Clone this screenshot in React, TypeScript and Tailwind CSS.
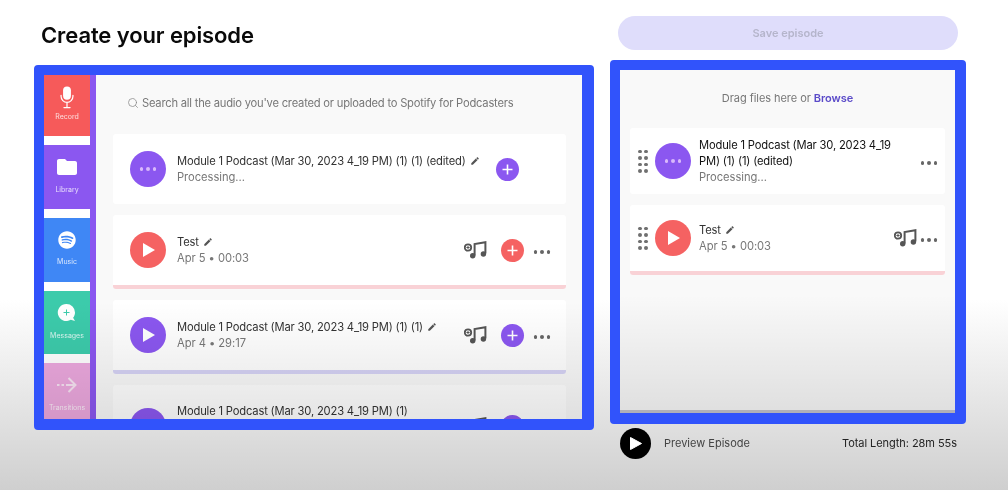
import type { ReactNode } from 'react';
import { Search } from 'lucide-react';
import { FaSpotify } from 'react-icons/fa';
import { MdEdit, MdFolder } from 'react-icons/md';

const font = { fontFamily: 'Inter, "Noto Sans", sans-serif' };

function MicIcon() {
  return (
    <svg width="14" height="23" viewBox="0 0 16 26" fill="none">
      <rect x="3.5" y="0.5" width="9" height="15" rx="4.5" fill="#fff" />
      <path d="M1.2 10.5v1.2a6.8 6.8 0 0 0 13.6 0v-1.2M8 18.5v5M4.5 24.5h7" stroke="#fff" strokeWidth="1.4" strokeLinecap="round" />
    </svg>
  );
}

function BubbleIcon() {
  return (
    <svg width="20" height="20" viewBox="0 0 20 20">
      <path d="M9.5 1a8.5 8.5 0 0 1 8.5 8.5c0 2-.7 3.9-1.9 5.3l1.9 3.2-4.2-1.3a8.5 8.5 0 1 1-4.3-15.7Z" fill="#fff" />
      <path d="M9.5 6.5v6M6.5 9.5h6" stroke="#3ccbab" strokeWidth="1" />
    </svg>
  );
}

function ArrowIcon() {
  return (
    <svg width="20" height="16" viewBox="0 0 20 16" fill="none" stroke="#f8e3f3" strokeWidth="2">
      <path d="M0 8h2.5M4.5 8h2.5M9 8h9.5" />
      <path d="M11.5 1l7 7-7 7" />
    </svg>
  );
}

function MusicAddIcon() {
  return (
    <svg width="23" height="18" viewBox="0 0 23 18" fill="none">
      <circle cx="4" cy="6.5" r="3.2" stroke="#555" strokeWidth="1.8" />
      <path d="M2.4 6.5h3.2M4 4.9v3.2" stroke="#555" strokeWidth="1" />
      <path d="M10.6 14.5V3L21.4 1.2v11.3" stroke="#555" strokeWidth="2" />
      <circle cx="8.7" cy="14.8" r="2.7" fill="#555" />
      <circle cx="19.4" cy="13" r="2.7" fill="#555" />
    </svg>
  );
}

function Dots({ className }: { className: string }) {
  return (
    <div className={`flex gap-[3px] ${className}`}>
      <span className="w-[3.5px] h-[3.5px] rounded-full bg-current" />
      <span className="w-[3.5px] h-[3.5px] rounded-full bg-current" />
      <span className="w-[3.5px] h-[3.5px] rounded-full bg-current" />
    </div>
  );
}

function PlayCircle({ color, processing }: { color: string; processing?: boolean }) {
  return (
    <div className={`w-[36px] h-[36px] shrink-0 rounded-full flex items-center justify-center ${color}`}>
      {processing ? (
        <Dots className="text-[#d9b8fb]" />
      ) : (
        <svg width="14" height="16" viewBox="0 0 14 16" className="ml-[2px]">
          <path d="M1 1l12 7-12 7Z" fill="#fff" />
        </svg>
      )}
    </div>
  );
}

function AddButton({ color }: { color: string }) {
  return (
    <div className={`w-[23px] h-[23px] shrink-0 rounded-full flex items-center justify-center ${color}`}>
      <svg width="11" height="11" viewBox="0 0 11 11">
        <path d="M5.5 0.5v10M0.5 5.5h10" stroke="#fff" strokeWidth="1.6" />
      </svg>
    </div>
  );
}

function Grip() {
  return (
    <div className="grid grid-cols-2 gap-x-[2.5px] gap-y-[3px] shrink-0 mr-[7.5px]">
      {[0, 1, 2, 3, 4, 5, 6, 7].map((i) => (
        <span key={i} className="w-[3.5px] h-[3.5px] rounded-full bg-[#707070]" />
      ))}
    </div>
  );
}

function Title({ children, dark }: { children: ReactNode; dark?: boolean }) {
  return (
    <div className={`text-[11.2px] leading-[16px] tracking-[-0.17px] ${dark ? 'text-[#111]' : 'text-[#333]'}`}>
      {children}
    </div>
  );
}

function Sub({ children }: { children?: ReactNode }) {
  return <div className="h-[16px] text-[11.2px] leading-[16px] tracking-[-0.05px] text-[#777]">{children}</div>;
}

function Pencil() {
  return <MdEdit className="inline-block ml-[4px] align-[-1px] text-[#555]" size={10} />;
}

const tabs = [
  { label: 'Record', color: 'bg-[#f65a5a]', h: 'h-[61px]', labelGap: 'mt-[3px]', icon: <MicIcon /> },
  { label: 'Library', color: 'bg-[#8b57f0]', h: 'h-[64px]', labelGap: 'mt-[6px]', icon: <MdFolder size={24} color="#fff" /> },
  { label: 'Music', color: 'bg-[#3f87f5]', h: 'h-[64px]', labelGap: 'mt-[5px]', icon: <FaSpotify size={18} color="#fff" /> },
  { label: 'Messages', color: 'bg-[#3ccbab]', h: 'h-[63px]', labelGap: 'mt-[6px]', icon: <BubbleIcon /> },
  { label: 'Transitions', color: 'bg-[#eca8de]', h: 'h-[64px]', labelGap: 'mt-[6px]', icon: <ArrowIcon /> },
];

function LibraryCard({
  title,
  sub,
  circle,
  add,
  bar,
  processing,
  wrapped,
}: {
  title: string;
  sub?: string;
  circle: string;
  add: string;
  bar?: string;
  processing?: boolean;
  wrapped?: boolean;
}) {
  return (
    <div className="bg-white rounded-[3px] overflow-hidden shrink-0">
      <div className={`flex pl-[17px] pr-[16px] ${wrapped ? 'h-[82px] items-center' : 'h-[70px] items-center'}`}>
        <PlayCircle color={circle} processing={processing} />
        <div className={`ml-[11px] mr-[16px] whitespace-nowrap ${wrapped ? 'self-start pt-[18px]' : ''}`}>
          <Title>
            {title}
            {!wrapped && <Pencil />}
          </Title>
          {!wrapped && <Sub>{sub}</Sub>}
        </div>
        {processing ? (
          <AddButton color={add} />
        ) : (
          <div className="ml-auto flex items-center">
            <MusicAddIcon />
            <div className="ml-[14px] mr-[10px]">
              <AddButton color={add} />
            </div>
            <Dots className="text-[#666] translate-y-[2px]" />
          </div>
        )}
      </div>
      {bar && <div className={`h-[4px] ${bar}`} />}
    </div>
  );
}

export default function App() {
  return (
    <div className="relative h-[490px] w-full overflow-hidden bg-[linear-gradient(to_bottom,#ffffff_0px,#ffffff_300px,#cfcfcf_490px)] flex pl-[34px] blur-[0.3px]" style={font}>
      {/* left column */}
      <div className="w-[560px] shrink-0">
        <h1 className="h-[65px] pt-[21px] pl-[7px] text-[22px] leading-[28px] font-semibold text-[#0a0a0a] tracking-[-0.1px]">
          Create your episode
        </h1>
        <div className="h-[365px] border-t-[10px] border-l-[10px] border-r-[12px] border-b-[11px] border-[#3153fb] rounded-[4px]">
          <div className="relative h-full flex overflow-hidden bg-[#f9f9f9]">
            <div className="w-[52px] shrink-0 bg-[#8b57f0]">
              <div className="w-[46px] flex flex-col gap-[9px] bg-white">
                {tabs.map((t) => (
                  <div key={t.label} className={`${t.h} ${t.color} flex flex-col items-center`}>
                    <div className="h-[24px] mt-[10px] flex items-center justify-center">{t.icon}</div>
                    <div className={`${t.labelGap} text-[7px] leading-[10px] text-white/80 whitespace-nowrap`}>{t.label}</div>
                  </div>
                ))}
              </div>
            </div>
            <div className="flex-1 min-w-0 pl-[17px] pr-[16px] pt-[20px]">
              <div className="flex items-center pl-[14px] h-[16px] text-[11.2px] tracking-[-0.22px] text-[#777]">
                <Search size={12} className="text-[#888] mr-[3px]" strokeWidth={1.5} />
                Search all the audio you've created or uploaded to Spotify for Podcasters
              </div>
              <div className="mt-[23px] flex flex-col gap-[11px]">
                <LibraryCard
                  title="Module 1 Podcast (Mar 30, 2023 4_19 PM) (1) (1) (edited)"
                  sub="Processing..."
                  circle="bg-[#8b57f0]"
                  add="bg-[#8b57f0]"
                  processing
                />
                <LibraryCard title="Test" sub="Apr 5 • 00:03" circle="bg-[#f56262]" add="bg-[#f56262]" bar="bg-[#f9d2d6]" />
                <LibraryCard
                  title="Module 1 Podcast (Mar 30, 2023 4_19 PM) (1) (1)"
                  sub="Apr 4 • 29:17"
                  circle="bg-[#8b57f0]"
                  add="bg-[#8b57f0]"
                  bar="bg-[#d6d3f5]"
                />
                <LibraryCard title="Module 1 Podcast (Mar 30, 2023 4_19 PM) (1)" circle="bg-[#8b57f0]" add="bg-[#8b57f0]" wrapped />
              </div>
            </div>
            <div className="absolute inset-0 pointer-events-none bg-[linear-gradient(to_bottom,rgba(0,0,0,0)_66%,rgba(0,0,0,0.1)_100%)]" />
          </div>
        </div>
      </div>

      {/* right column */}
      <div className="ml-[16px] w-[356px] shrink-0">
        <div className="h-[60px] pt-[16px] pl-[8px] pr-[8px]">
          <div className="h-[34px] rounded-full bg-[#dfddfb] flex items-center justify-center text-[11px] font-semibold text-[#b5b5cb]">
            Save episode
          </div>
        </div>
        <div className="h-[364px] border-t-[10px] border-l-[10px] border-r-[11px] border-b-[11px] border-[#3153fb] rounded-[4px]">
          <div className="relative h-full overflow-hidden bg-[#f9f9f9] border-b-[3px] border-[#b0b0b8] px-[10px] pt-[20px]">
            <div className="h-[16px] flex items-center justify-center text-[11px] tracking-[-0.05px] text-[#777]">
              Drag files here or<span className="ml-[3px] font-semibold text-[#5b4bc9]">Browse</span>
            </div>
            <div className="mt-[22px] flex flex-col gap-[11px]">
              <div className="bg-white rounded-[3px] h-[66px] flex items-center pl-[8px] pr-[8px]">
                <Grip />
                <PlayCircle color="bg-[#8b57f0]" processing />
                <div className="ml-[8px] w-[205px]">
                  <Title dark>Module 1 Podcast (Mar 30, 2023 4_19 PM) (1) (1) (edited)</Title>
                  <Sub>Processing...</Sub>
                </div>
                <Dots className="ml-auto text-[#666] translate-y-[2px]" />
              </div>
              <div className="bg-white rounded-[3px] overflow-hidden">
                <div className="h-[66px] flex items-center pl-[8px] pr-[8px]">
                  <Grip />
                  <PlayCircle color="bg-[#f56262]" />
                  <div className="ml-[8px]">
                    <Title>
                      Test
                      <Pencil />
                    </Title>
                    <Sub>Apr 5 • 00:03</Sub>
                  </div>
                  <div className="ml-auto flex items-center gap-[4px]">
                    <MusicAddIcon />
                    <Dots className="text-[#666] translate-y-[2px]" />
                  </div>
                </div>
                <div className="h-[4px] bg-[#f9d2d6]" />
              </div>
            </div>
            <div className="absolute inset-0 pointer-events-none bg-[linear-gradient(to_bottom,rgba(0,0,0,0)_66%,rgba(0,0,0,0.1)_100%)]" />
          </div>
        </div>
        <div className="mt-[4px] h-[31px] pl-[10px] pr-[9px] flex items-center text-[11px]">
          <div className="w-[31px] h-[31px] rounded-full bg-black flex items-center justify-center">
            <svg width="14" height="15" viewBox="0 0 14 15" className="ml-[1px]">
              <path d="M1.5 1.5l11 6-11 6Z" fill="#fff" stroke="#fff" strokeLinejoin="round" />
            </svg>
          </div>
          <span className="ml-[13px] text-[#444]">Preview Episode</span>
          <span className="ml-auto text-[#222] tracking-[-0.05px]">Total Length: 28m 55s</span>
        </div>
      </div>
    </div>
  );
}
